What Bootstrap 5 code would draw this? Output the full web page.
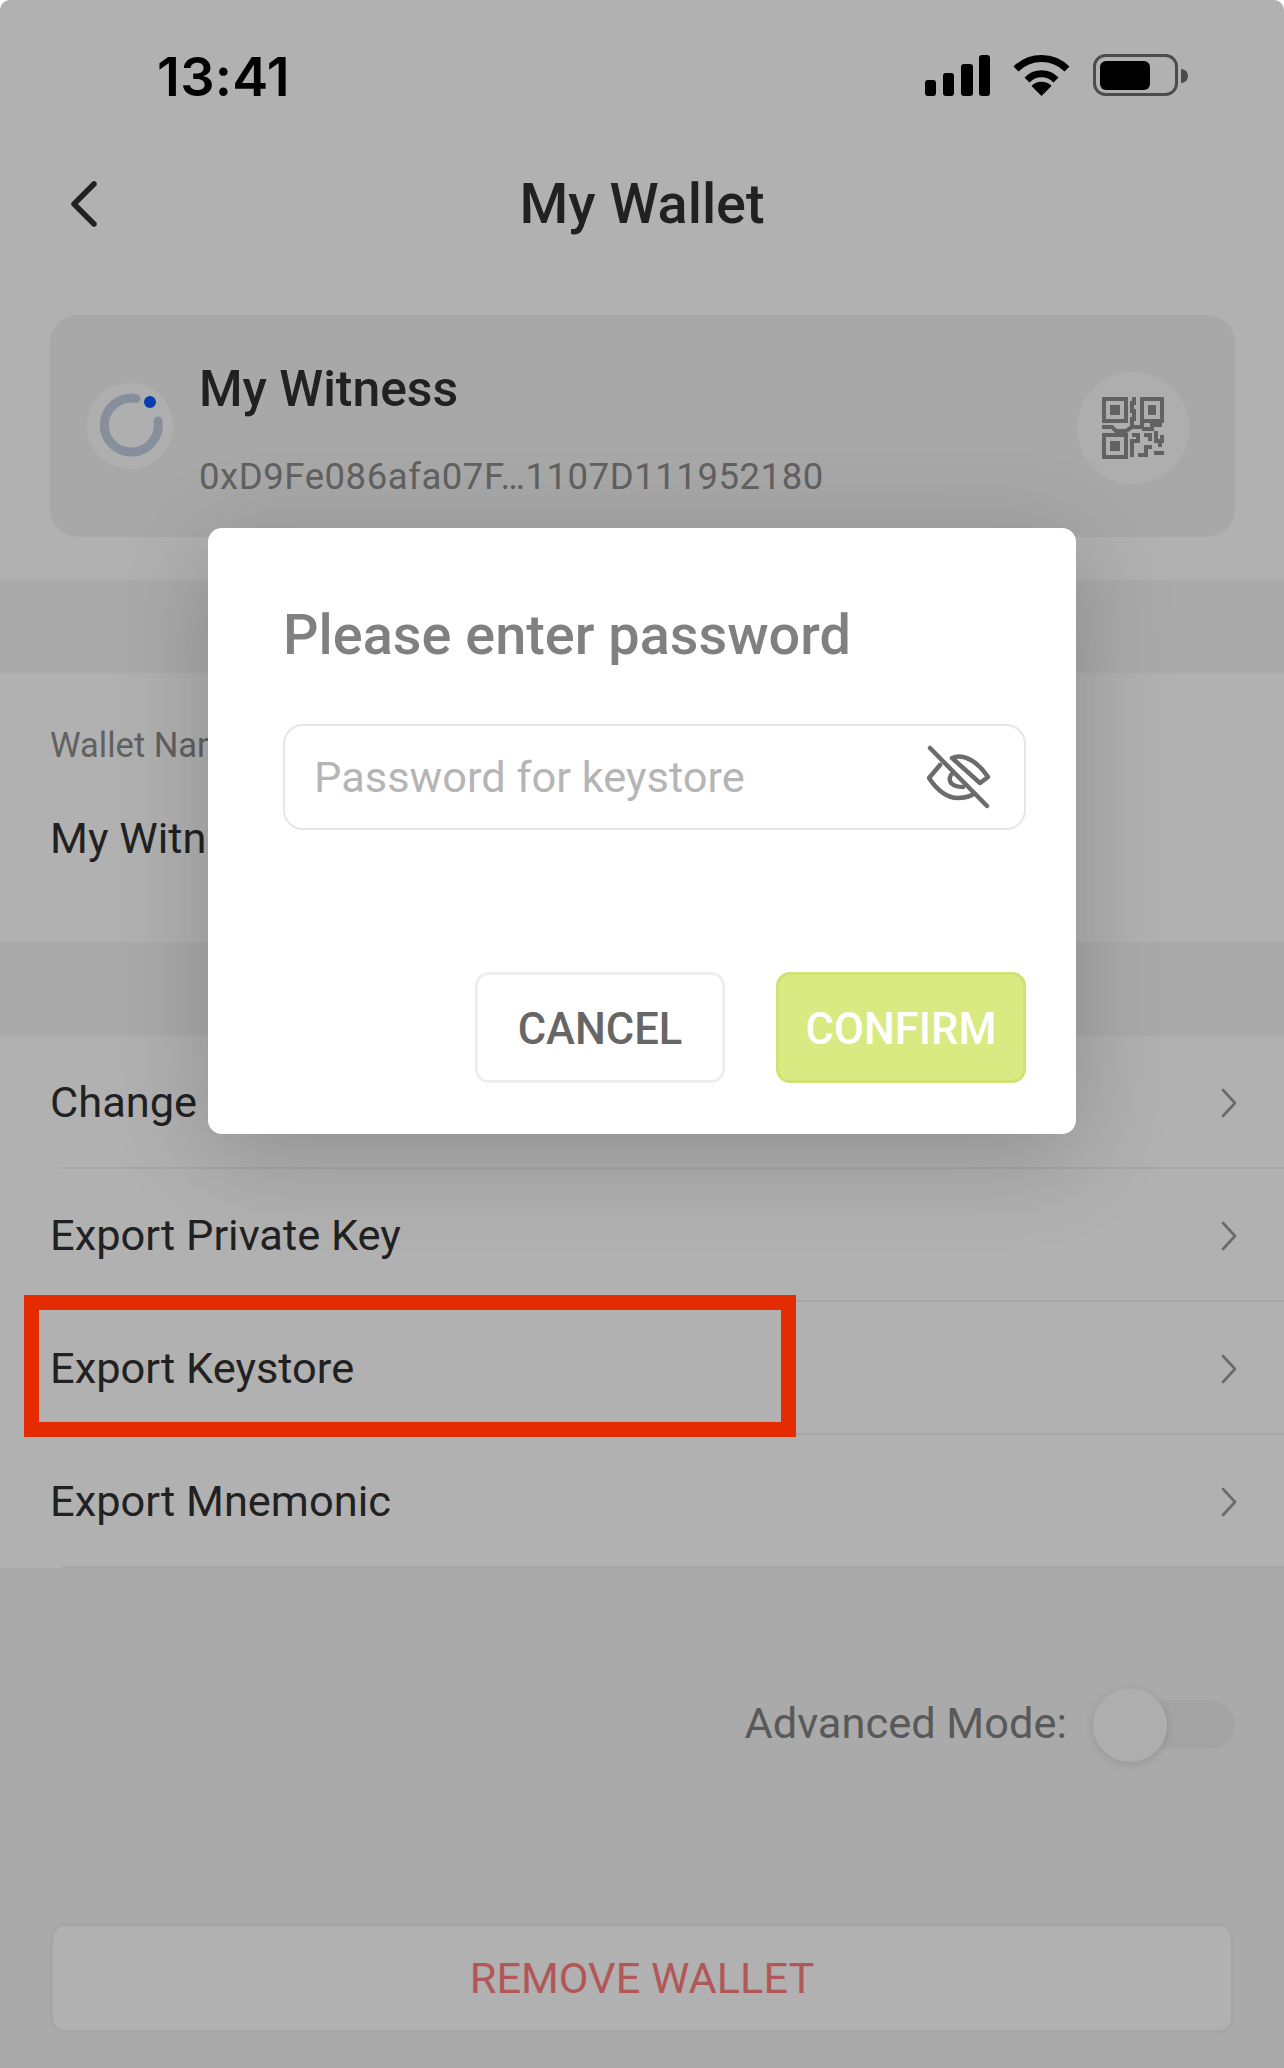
<!DOCTYPE html>
<html lang="en">
<head>
<meta charset="utf-8">
<title>My Wallet</title>
<link rel="stylesheet" href="https://cdn.jsdelivr.net/npm/bootstrap@5.3.0/dist/css/bootstrap.min.css">
<style>
html,body{margin:0;background:#fff}
body{font-family:Roboto,"Liberation Sans",sans-serif;width:1284px;height:2068px;overflow:hidden;position:relative;color:#303030}
.phone{width:1284px;height:2068px;background:#f5f5f5;display:flex;flex-direction:column;border-radius:10px 10px 0 0;overflow:hidden}
.whitepart{background:#fff}
.statusbar{height:148px;padding:51px 96px 0 157px;display:flex;justify-content:space-between;align-items:flex-start}
.statusicons{margin-top:3px}
.clock{font-family:Inter,Roboto,sans-serif;font-weight:600;font-size:54px;line-height:52px;color:#000;letter-spacing:.3px}
.titlebar{height:110px;position:relative;display:flex;align-items:center;justify-content:center;font-size:55.8px;font-weight:500;line-height:1;padding-top:3px}
.backbtn{position:absolute;left:69px;top:33px}
.acct{height:222px;margin:57px 49px 43px 50px;background:#f3f3f3;border-radius:28px;display:flex;align-items:center;padding:0 46px 0 37px}
.acct-main{flex:1;margin-left:26px;padding-top:13px}
.acct-name{font-size:49.8px;font-weight:500;line-height:56px;margin-bottom:38px;margin-top:-5px}
.acct-addr{font-size:36.500px;line-height:44px;color:#8c8c8c;letter-spacing:.55px}
.qrwrap{width:112px;height:112px;background:#fbfbfb;margin-top:4px}
.bandone{height:93px}
.bandtwo{height:94px}
.fieldblock{height:269px;background:#fff;padding:50px 50px 0}
.fld-label{font-size:34.500px;line-height:44px;color:#8c8c8c}
.fld-value{font-size:43.400px;line-height:52px;margin-top:46px}
.rows{background:#fff}
.rowitem{height:133px;margin-left:62px;padding:2px 47px 0 0;display:flex;align-items:center;justify-content:space-between;border-bottom:2px solid #f0f0f0;font-size:43.400px}
.rowitem>span{margin-left:-12px}
.advbar{display:flex;justify-content:flex-end;align-items:center;margin-top:119px;padding-right:49px;height:74px;font-size:43.400px;color:#808080;gap:30px}
.swtrack{width:138px;height:49px;background:#ececec;border-radius:25px;position:relative}
.swthumb{position:absolute;left:-4px;top:-12px;width:74px;height:74px;border-radius:50%;background:#fbfbfb;box-shadow:0 2px 10px rgba(0,0,0,.12)}
.removebtn{margin:162px 50px 0 50px;height:110px;background:#fff;border:3px solid #f0f0f0;border-radius:16px;display:flex;align-items:center;justify-content:center;font-size:43.300px;color:#ff7e7e;padding-top:2px}
.scrim{position:absolute;inset:0;background:rgba(0,0,0,.305);border-radius:10px 10px 0 0}
.dialogbox{position:absolute;left:208px;top:528px;width:868px;height:606px;background:#fff;border-radius:14px;box-shadow:0 20px 100px rgba(0,0,0,.2);padding:0 50px 0 75px;display:flex;flex-direction:column}
.dlg-title{font-size:55.800px;font-weight:500;color:#808080;line-height:64px;margin-top:75px;margin-bottom:57px}
.pwbox{height:106px;border:2px solid #e6e6e6;border-radius:20px;display:flex;align-items:center;justify-content:space-between;padding:0 33px 0 29px;font-size:43.400px;color:#b5b5b5}
.pwbox>span{padding-top:2px}
.dlg-actions{display:flex;justify-content:flex-end;gap:51px;margin-top:142px}
.dlg-btn{height:111px;border-radius:14px;display:flex;align-items:center;justify-content:center;font-size:43.500px;font-weight:500;padding-top:5px}
.dlg-cancel{width:250px;border:3px solid #eeeeee;color:#666}
.dlg-confirm{width:250px;background:#d9ea82;border:3px solid #cfe274;color:#fff}
.redbox{position:absolute;left:24px;top:1295px;width:772px;height:142px;border:15px solid #e52b00}
</style>
</head>
<body>
<div class="phone">
  <div class="whitepart">
    <div class="statusbar">
      <div class="clock">13:41</div>
      <svg width="263" height="44" viewBox="925 54 263 44" class="d-block statusicons">
        <rect x="925" y="80" width="11" height="16" rx="3" fill="#000"/>
        <rect x="943" y="73" width="11" height="23" rx="3" fill="#000"/>
        <rect x="961" y="64" width="12" height="32" rx="3" fill="#000"/>
        <rect x="979" y="55" width="11" height="41" rx="3" fill="#000"/>
        <path d="M1016 69a36 36 0 0 1 51 0" fill="none" stroke="#000" stroke-width="7"/>
        <path d="M1027 80a20 20 0 0 1 29 0" fill="none" stroke="#000" stroke-width="7"/>
        <path d="M1041.500 96l-10-10a14 14 0 0 1 20 0z" fill="#000"/>
        <rect x="1094.500" y="55.500" width="82" height="39" rx="11" fill="none" stroke="#6e6e6e" stroke-width="3"/>
        <rect x="1100" y="61" width="50" height="29" rx="6" fill="#000"/>
        <path d="M1181 69a7 7 0 0 1 0 14z" fill="#6e6e6e"/>
      </svg>
    </div>
    <div class="titlebar">
      <svg class="backbtn" width="28" height="46" viewBox="0 0 28 46"><path d="M25 3L5 23l20 20" fill="none" stroke="#303030" stroke-width="5.500" stroke-linecap="round" stroke-linejoin="round"/></svg>
      My Wallet
    </div>
    <div class="acct">
      <svg width="86" height="86" viewBox="0 0 86 86" class="flex-shrink-0">
        <circle cx="43" cy="43" r="43" fill="#fdfdfd"/>
        <path d="M49 15.500A27 27 0 1 0 71 38" fill="none" stroke="#c3cfe2" stroke-width="9" stroke-linecap="round"/>
        <circle cx="63" cy="19" r="6" fill="#0f5bff"/>
      </svg>
      <div class="acct-main">
        <div class="acct-name">My Witness</div>
        <div class="acct-addr">0xD9Fe086afa07F…1107D111952180</div>
      </div>
      <div class="d-flex align-items-center justify-content-center rounded-circle qrwrap">
        <svg width="62" height="62" viewBox="0 0 31 31">
          <g fill="none" stroke="#8e8e8e" stroke-width="2">
            <rect x="1" y="1" width="11" height="11"/><rect x="20" y="1" width="10" height="11"/><rect x="1" y="19" width="11" height="11"/>
            <path d="M16 0v3h-1v4h1v4h-1v5M0 15h5l2 2h5l3-2h5v-2M20 16h5v-2h5M15 19h3v3h-3v8M18 29h4v-4h3M21 19h3v3M27 17v5h3v-3M26 28h5M28 24h2"/>
          </g>
          <rect x="4" y="4" width="5" height="5" fill="#8e8e8e"/><rect x="23" y="4" width="4" height="5" fill="#8e8e8e"/><rect x="4" y="22" width="5" height="5" fill="#8e8e8e"/>
        </svg>
      </div>
    </div>
  </div>
  <div class="bandone"></div>
  <div class="fieldblock">
    <div class="fld-label">Wallet Name</div>
    <div class="fld-value">My Witness</div>
  </div>
  <div class="bandtwo"></div>
  <div class="rows">
    <div class="rowitem"><span>Change Password</span><svg width="16" height="30" viewBox="0 0 16 30"><path d="M2 2l12 13L2 28" fill="none" stroke="#999" stroke-width="2.600" stroke-linecap="round" stroke-linejoin="round"/></svg></div>
    <div class="rowitem"><span>Export Private Key</span><svg width="16" height="30" viewBox="0 0 16 30"><path d="M2 2l12 13L2 28" fill="none" stroke="#999" stroke-width="2.600" stroke-linecap="round" stroke-linejoin="round"/></svg></div>
    <div class="rowitem"><span>Export Keystore</span><svg width="16" height="30" viewBox="0 0 16 30"><path d="M2 2l12 13L2 28" fill="none" stroke="#999" stroke-width="2.600" stroke-linecap="round" stroke-linejoin="round"/></svg></div>
    <div class="rowitem"><span>Export Mnemonic</span><svg width="16" height="30" viewBox="0 0 16 30"><path d="M2 2l12 13L2 28" fill="none" stroke="#999" stroke-width="2.600" stroke-linecap="round" stroke-linejoin="round"/></svg></div>
  </div>
  <div class="advbar"><span>Advanced Mode:</span><div class="swtrack"><div class="swthumb"></div></div></div>
  <div class="removebtn">REMOVE WALLET</div>
</div>
<div class="scrim"></div>
<div class="redbox"></div>
<div class="dialogbox">
  <div class="dlg-title">Please enter password</div>
  <div class="pwbox"><span>Password for keystore</span>
    <svg width="64" height="64" viewBox="0 0 64 64"><g fill="none" stroke="#6b6b6b" stroke-width="4.500" stroke-linecap="round" stroke-linejoin="round"><path d="M3 3l57 58"/><path d="M25 13c12-5 26 4 36 19l-8 6z"/><path d="M13 20L2 33c8 12 18 20 29 20 5 0 10-1 14-3"/><path d="M26 28c-4 3-4 7-2 10 3 3 8 4 12 4"/></g></svg>
  </div>
  <div class="dlg-actions">
    <div class="dlg-btn dlg-cancel">CANCEL</div>
    <div class="dlg-btn dlg-confirm">CONFIRM</div>
  </div>
</div>
<script src="https://cdn.jsdelivr.net/npm/bootstrap@5.3.0/dist/js/bootstrap.bundle.min.js"></script>
</body>
</html>
